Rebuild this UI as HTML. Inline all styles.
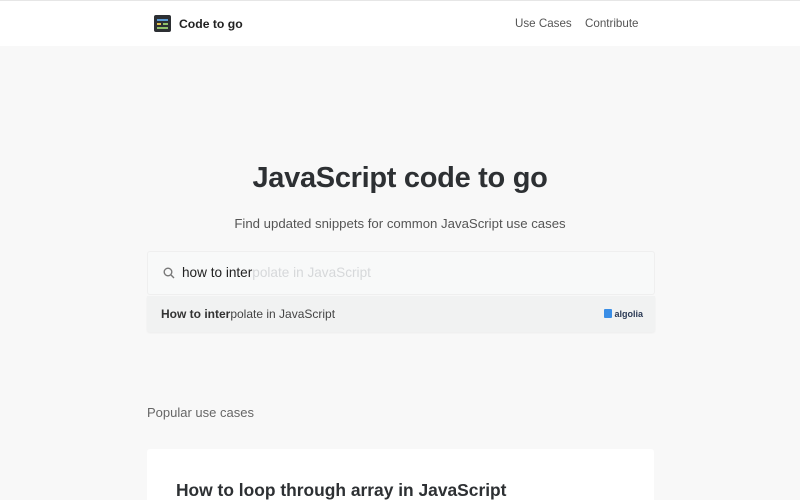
<!DOCTYPE html>
<html><head><style>
*{margin:0;padding:0;box-sizing:border-box}
html,body{width:800px;height:500px;overflow:hidden}
body{background:#f8f8f8;font-family:"Liberation Sans",sans-serif;color:#2d2f31;position:relative}
.nav{position:absolute;top:0;left:0;width:800px;height:46px;background:#fff;border-top:1px solid #e6e6e6}
.logo{position:absolute;left:154px;top:14px;width:17px;height:17px;background:#2c2f33;border-radius:2px}
.logo i{position:absolute;height:2px;display:block}
.brand{position:absolute;left:179px;top:16px;font-size:12.2px;font-weight:bold;color:#222}
.links{position:absolute;top:16px;font-size:11.6px;color:#555}
h1{position:absolute;top:162px;width:800px;text-align:center;font-size:29px;font-weight:bold;color:#2d3033;letter-spacing:-0.3px}
.sub{position:absolute;top:216px;width:800px;text-align:center;font-size:13.2px;color:#555}
.search{position:absolute;left:147px;top:251px;width:508px;height:44px;background:#f8f9f9;border:1px solid #efefef;border-radius:3px}
.search .q{position:absolute;left:34px;top:13px;font-size:13.6px;color:#222}
.search .q span{color:#d6d8da}
.res{position:absolute;left:147px;top:296px;width:508px;height:36px;background:#f1f2f2;border-radius:0 0 3px 3px;box-shadow:0 1px 2px rgba(0,0,0,.05)}
.res .t{position:absolute;left:14px;top:11px;font-size:12px;color:#444}
.alg{position:absolute;right:12px;top:13px;font-size:9px;font-weight:bold;color:#2b3a55}
.alg b{display:inline-block;width:8px;height:9px;background:#3a8ee6;vertical-align:-1px;margin-right:2px;border-radius:1px}
.pop{position:absolute;left:147px;top:405px;font-size:13px;color:#666}
.card{position:absolute;left:147px;top:449px;width:507px;height:51px;background:#fff;border-radius:3px 3px 0 0}
.card h2{position:absolute;left:29px;top:31px;font-size:17.4px;font-weight:bold;color:#2d3033;white-space:nowrap}
</style></head><body>
<div class="nav">
<div class="logo"><i style="left:3px;top:4px;width:11px;background:#5b9bd5"></i><i style="left:3px;top:8px;width:4px;background:#e2c14f"></i><i style="left:9px;top:8px;width:5px;background:#8fc06a"></i><i style="left:3px;top:12px;width:11px;background:#8fc06a"></i></div>
<div class="brand">Code to go</div>
<div class="links" style="left:515px">Use Cases</div>
<div class="links" style="left:585px">Contribute</div>
</div>
<h1>JavaScript code to go</h1>
<div class="sub">Find updated snippets for common JavaScript use cases</div>
<div class="search">
<svg style="position:absolute;left:15px;top:15px" width="12" height="12" viewBox="0 0 12 12"><circle cx="5" cy="5" r="3.8" fill="none" stroke="#777" stroke-width="1.4"/><line x1="7.8" y1="7.8" x2="11" y2="11" stroke="#777" stroke-width="1.4"/></svg>
<div class="q">how to inter<span>polate in JavaScript</span></div>
</div>
<div class="res"><div class="t"><b style="color:#333">How to inter</b>polate in JavaScript</div><div class="alg"><b></b>algolia</div></div>
<div class="pop">Popular use cases</div>
<div class="card"><h2>How to loop through array in JavaScript</h2></div>
</body></html>
